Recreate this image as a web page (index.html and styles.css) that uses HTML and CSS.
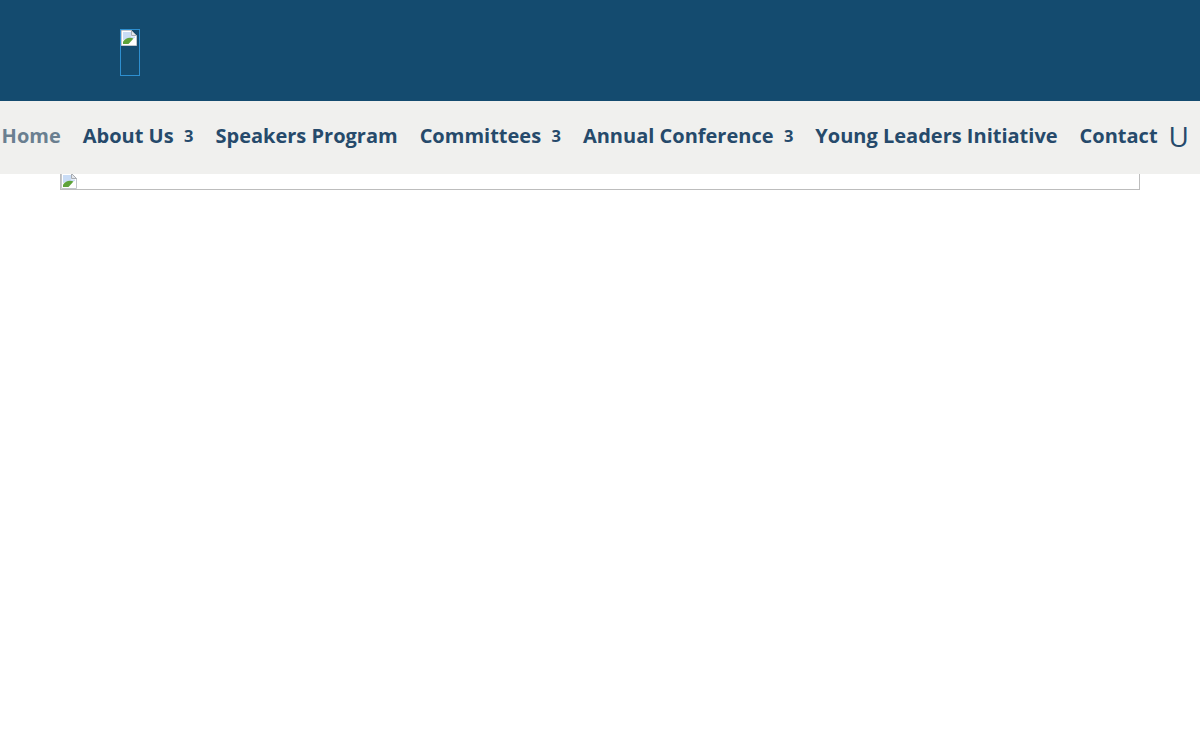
FILE: index.html
```html
<!DOCTYPE html>
<html lang="en">
<head>
<meta charset="utf-8">
<title>Home</title>
<link rel="stylesheet" href="styles.css">
</head>
<body>
<header class="top">
  <a class="logo" href="#" aria-label="Logo">
    <svg class="broken" viewBox="0 0 16 16" aria-hidden="true">
      <path d="M0.5 0.5H10.5L15.5 5.5V15.5H0.5Z" fill="#fff" stroke="#c3c7cc"/>
      <path d="M10.5 0.5V5.5H15.5Z" fill="#e4e7eb" stroke="#a9adb3"/>
      <path d="M2 2H10V6.5H14V8L2 10Z" fill="#c9dcf5"/>
      <path d="M2 14V11.5C4.5 8.5 8 6.5 12.5 8.5L7.5 14Z" fill="#5ea33a"/>
      <path d="M9 15L15 9V15Z" fill="#fff"/>
    </svg>
  </a>
</header>
<nav class="nav">
  <a class="item current" href="#">Home</a>
  <a class="item" href="#">About Us<span class="caret">3</span></a>
  <a class="item" href="#">Speakers Program</a>
  <a class="item" href="#">Committees<span class="caret">3</span></a>
  <a class="item" href="#">Annual Conference<span class="caret">3</span></a>
  <a class="item" href="#">Young Leaders Initiative</a>
  <a class="item" href="#">Contact</a>
  <span class="search">U</span>
</nav>
<main class="content">
  <div class="banner">
    <svg class="broken" viewBox="0 1 16 15" aria-hidden="true">
      <path d="M0.5 0.5H10.5L15.5 5.5V15.5H0.5Z" fill="#fff" stroke="#c3c7cc"/>
      <path d="M10.5 0.5V5.5H15.5Z" fill="#e4e7eb" stroke="#a9adb3"/>
      <path d="M2 2H10V6.5H14V8L2 10Z" fill="#c9dcf5"/>
      <path d="M2 14V11.5C4.5 8.5 8 6.5 12.5 8.5L7.5 14Z" fill="#5ea33a"/>
      <path d="M9 15L15 9V15Z" fill="#fff"/>
    </svg>
  </div>
</main>
</body>
</html>
```
FILE: styles.css
```css
* { box-sizing: border-box; }
html, body { margin: 0; padding: 0; background: #fff; }
body { font-family: "Open Sans", "Liberation Sans", sans-serif; }
.top { height: 101px; background: #144b6f; padding: 29px 0 0 120px; }
.logo { display: block; width: 20px; height: 47px; border: 1px solid #2e8fd0; }
.broken { display: block; width: 16px; height: 16px; }
.nav { height: 73px; background: #f0f0ee; display: flex; align-items: center; padding: 0 0 3px 1.6px; white-space: nowrap; }
.item { display: flex; align-items: center; margin-right: 22px; font-size: 20px; font-weight: 700; line-height: 28px; color: #264a6b; text-decoration: none; }
.item.current { color: #6a7f90; }
.caret { margin-left: 10.4px; font-size: 16.5px; font-weight: 700; }
.search { margin-left: -11px; font-size: 28px; line-height: 30px; color: #264a6b; }
.content { padding: 0 60px; }
.banner { height: 16px; border: 1px solid #bdbdbd; border-top: 0; overflow: hidden; }
.banner .broken { width: 16px; height: 15px; }
```
